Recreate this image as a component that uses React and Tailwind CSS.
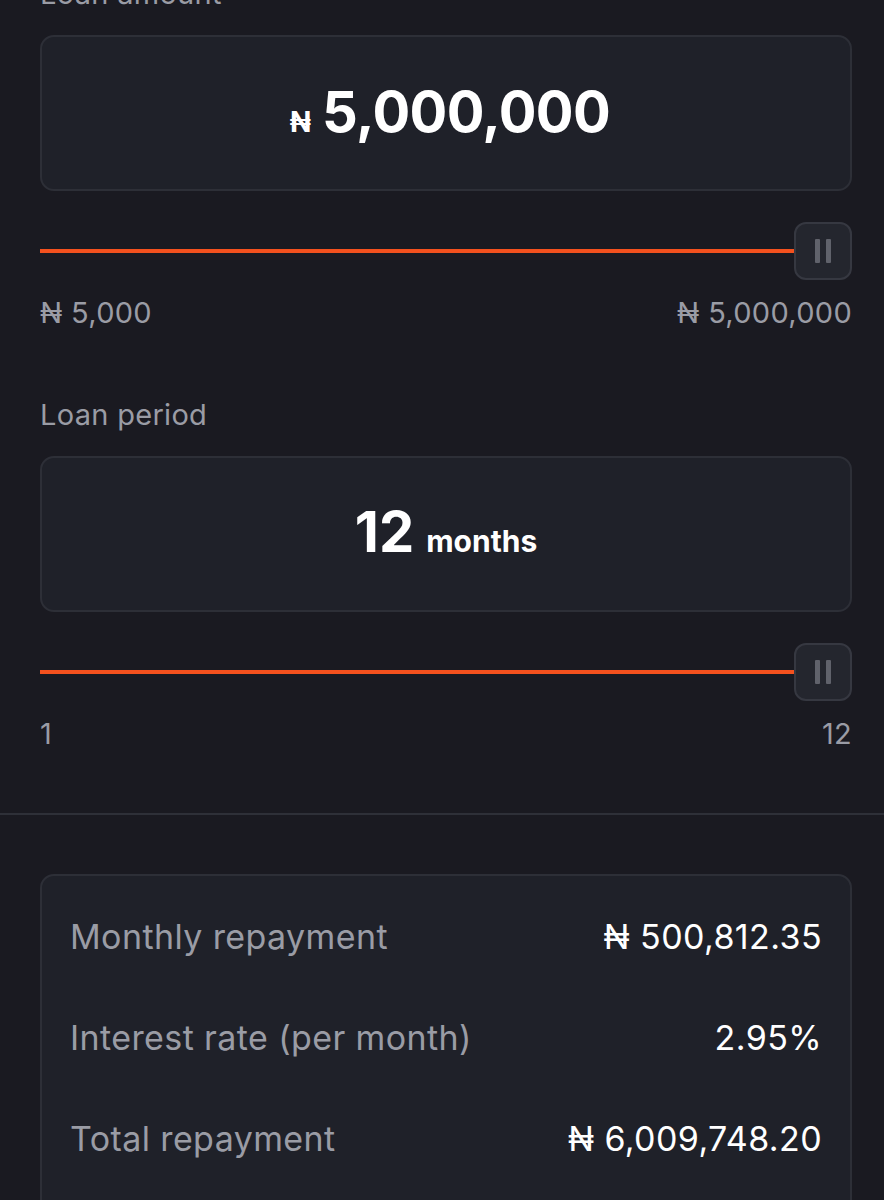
import React from 'react';

const ORANGE = 'bg-[#f4511e]';

const Thumb = () => (
  <div className="w-[58px] h-[58px] shrink-0 rounded-[12px] bg-[#24262e] border-2 border-[#363841] flex items-center justify-center gap-[6px]">
    <span className="block w-[5px] h-[24px] rounded-[1px] bg-[#60626b]" />
    <span className="block w-[5px] h-[24px] rounded-[1px] bg-[#60626b]" />
  </div>
);

const Slider = () => (
  <div className="flex items-center mt-[31px]">
    <div className={`flex-1 h-[4px] ${ORANGE}`} />
    <Thumb />
  </div>
);

const Range = ({ min, max }) => (
  <div className="flex justify-between mt-[15px] text-[29px] tracking-[0.3px] leading-[36px] text-[#9a9ca5]">
    <span>{min}</span>
    <span>{max}</span>
  </div>
);

const Field = ({ label, children, className = '' }) => (
  <div className={className}>
    <div className="text-[29px] tracking-[0.3px] leading-[36px] text-[#9a9ca5]">{label}</div>
    <div className="mt-[23px] h-[156px] rounded-[14px] bg-[#1f2129] border-2 border-[#2d2f37] flex items-center justify-center">
      {children}
    </div>
  </div>
);

const Row = ({ label, value }) => (
  <div className="flex items-center justify-between h-[42px] text-[34px] tracking-[0.4px]">
    <span className="text-[#9a9ca5]">{label}</span>
    <span className="text-white">{value}</span>
  </div>
);

export default function App() {
  return (
    <div
      className="min-h-screen bg-[#1a1a21] overflow-hidden"
      style={{ fontFamily: 'Inter, "Noto Sans", sans-serif' }}
    >
      <div className="pl-[40px] pr-[32px] -mt-[24px]">
        {/* Loan amount */}
        <Field label="Loan amount">
          <div className="flex items-baseline gap-[11px] pl-[8px] text-white font-bold">
            <span className="text-[28px]">₦</span>
            <span className="text-[56px] leading-none tracking-[-0.6px]">5,000,000</span>
          </div>
        </Field>
        <Slider />
        <Range min="₦ 5,000" max="₦ 5,000,000" />

        {/* Loan period */}
        <Field label="Loan period" className="mt-[66px]">
          <div className="flex items-baseline gap-[12px] text-white font-bold">
            <span className="text-[56px] leading-none">12</span>
            <span className="text-[30px]">months</span>
          </div>
        </Field>
        <Slider />
        <Range min="1" max="12" />
      </div>

      <div className="mt-[61px] h-[2px] bg-[#2e3038]" />

      {/* Repayment summary */}
      <div className="pl-[40px] pr-[32px] mt-[59px]">
        <div className="rounded-t-[14px] bg-[#1f2129] border-2 border-[#2d2f37] px-[28px] pt-[39px] pb-[60px] flex flex-col gap-[59px]">
          <Row label="Monthly repayment" value="₦ 500,812.35" />
          <Row label="Interest rate (per month)" value="2.95%" />
          <Row label="Total repayment" value="₦ 6,009,748.20" />
        </div>
      </div>
    </div>
  );
}
